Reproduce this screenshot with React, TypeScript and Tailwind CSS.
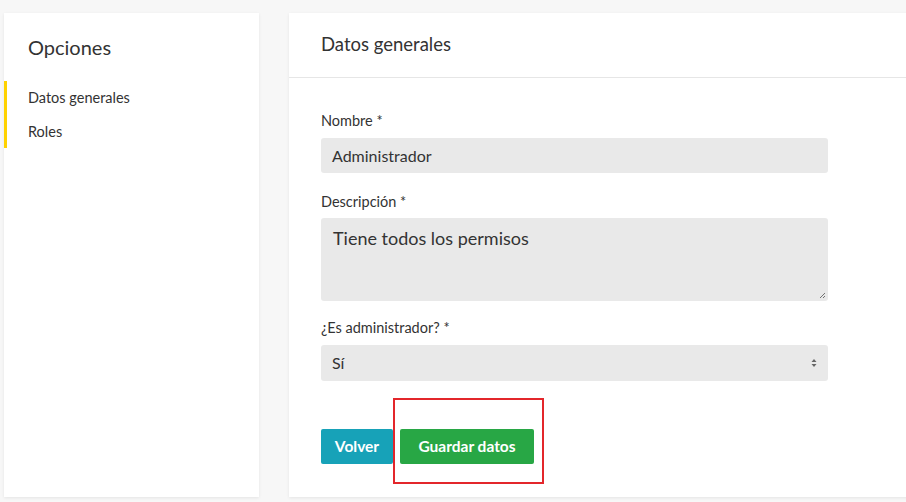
export default function App() {
  return (
    <main
      className="relative flex h-[502px] w-[906px] gap-[30px] overflow-hidden bg-[#f7f7f7] pl-[4px] pt-[13px] text-[#333]"
      style={{ fontFamily: "Lato, 'Open Sans', sans-serif" }}
    >
      <aside className="h-[484px] w-[255px] shrink-0 bg-white shadow-[0_1px_3px_rgba(0,0,0,0.08)]">
        <h2 className="pl-[24px] pt-[20px] text-[20px] leading-[28px] font-normal text-[#333]">Opciones</h2>
        <nav className="mt-[20px] flex flex-col border-l-[3px] border-[#ffd200]">
          <a className="flex h-[34px] items-center pl-[21px] text-[14.5px] text-[#333]">Datos generales</a>
          <a className="flex h-[33px] items-center pl-[21px] text-[14.5px] text-[#333]">Roles</a>
        </nav>
      </aside>

      <section className="h-[484px] w-[640px] shrink-0 bg-white shadow-[0_1px_3px_rgba(0,0,0,0.08)]">
        <header className="flex h-[65px] items-center border-b border-[#e6e6e6] pl-[32px]">
          <h1 className="text-[18.5px] font-normal text-[#333]">Datos generales</h1>
        </header>
        <form className="flex w-[539px] flex-col pl-[32px] pt-[33px]">
          <label className="text-[14.5px] leading-[20px]">Nombre *</label>
          <div className="mt-[7px] flex h-[35px] items-center rounded-[3px] bg-[#e9e9e9] px-[11px] text-[16px]">
            Administrador
          </div>

          <label className="mt-[19px] text-[14.5px] leading-[20px]">Descripción *</label>
          <div className="relative mt-[6px] h-[83px] rounded-[3px] bg-[#e9e9e9] px-[12px] pt-[8px] text-[18px] leading-[24px]">
            Tiene todos los permisos
            <svg className="absolute bottom-[2px] right-[2px]" width="7" height="7" viewBox="0 0 7 7">
              <path d="M1 6 L6 1 M4 6 L6 4" stroke="#555" strokeWidth="0.8" />
            </svg>
          </div>

          <label className="mt-[17px] text-[14.5px] leading-[20px]">¿Es administrador? *</label>
          <div className="mt-[7px] flex h-[36px] items-center justify-between rounded-[3px] bg-[#e9e9e9] px-[11px] text-[16px]">
            <span>Sí</span>
            <svg width="6" height="10" viewBox="0 0 6 10">
              <path d="M3 1 L5.5 4 L0.5 4 Z M3 9 L5.5 6 L0.5 6 Z" fill="#666" />
            </svg>
          </div>

          <div className="mt-[48px] flex gap-[7px]">
            <button type="button" className="h-[35px] w-[72px] rounded-[2px] bg-[#17a2b8] text-[15.5px] font-bold text-white">
              Volver
            </button>
            <button type="button" className="h-[35px] w-[134px] rounded-[2px] bg-[#28a745] text-[15.5px] font-bold text-white">
              Guardar datos
            </button>
          </div>
        </form>
      </section>

      <div className="pointer-events-none absolute left-[393px] top-[398px] h-[86px] w-[151px] border-2 border-[#e3262b]" />
    </main>
  );
}
